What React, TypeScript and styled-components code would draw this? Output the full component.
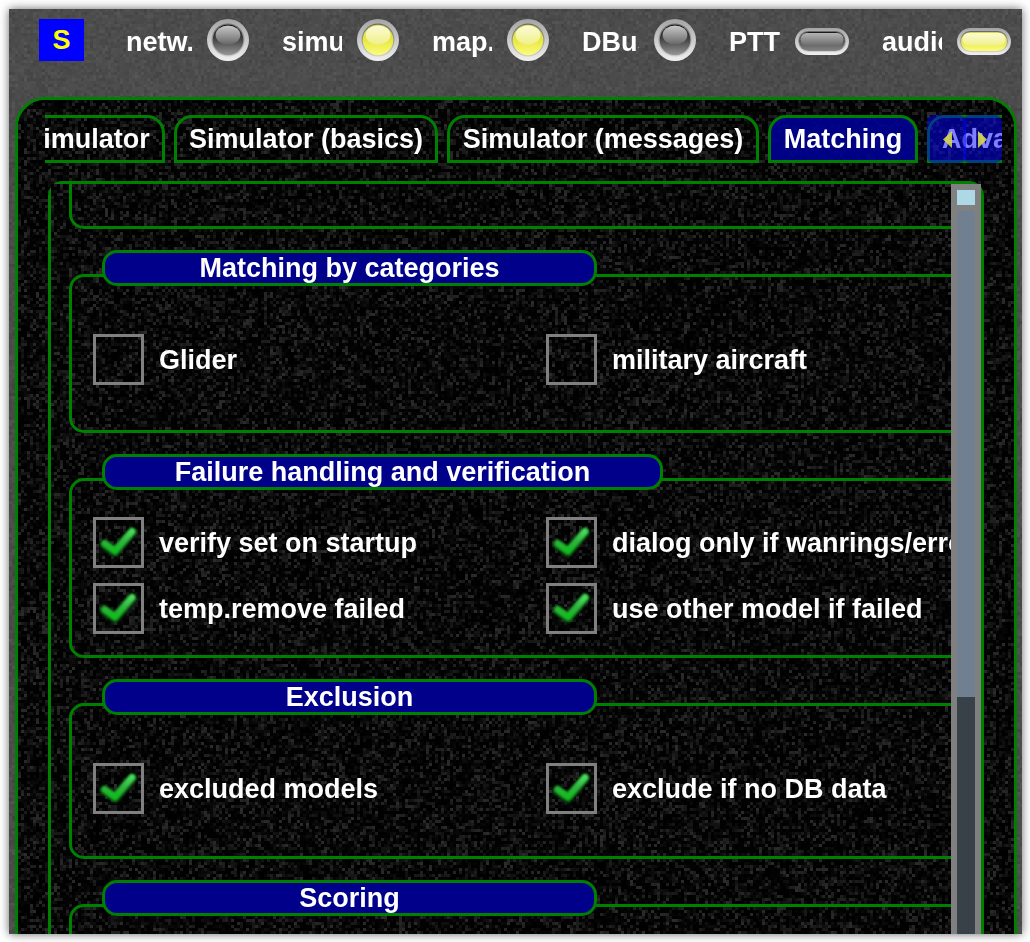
import React, { useLayoutEffect, useRef } from 'react';
import styled, { createGlobalStyle, css } from 'styled-components';

const GREEN = '#008000';
const NAVY = '#00008b';

const GlobalStyle = createGlobalStyle`
  * { box-sizing: border-box; }
  body { margin: 0; background: #fff; overflow: hidden; }
`;

const Page = styled.div`
  width: 1030px;
  height: 942px;
  padding: 9px 8px 8px 9px;
  background: #fff;
  overflow: hidden;
  font: bold 27px/33px 'Liberation Sans', Arial, sans-serif;
  color: #fff;
`;

const Window = styled.div`
  position: relative;
  width: 1013px;
  height: 925px;
  display: flex;
  flex-direction: column;
  background: #4c4c4c;
  box-shadow: 0 0 9px rgba(0, 0, 0, 0.6);
`;

const WindowBody = styled.div`
  position: relative;
  flex: 1;
  min-height: 0;
  display: flex;
  flex-direction: column;
  overflow: hidden;
`;

const GrainCanvas = styled.canvas`
  position: absolute;
  top: 0;
  left: 0;
  image-rendering: pixelated;
`;

const StatusBar = styled.header`
  position: relative;
  flex: none;
  display: flex;
  align-items: center;
  height: 88px;
  padding: 0 11px 26px 30px;
`;

const Badge = styled.div`
  display: flex;
  align-items: center;
  justify-content: center;
  width: 45px;
  height: 42px;
  margin-right: 42px;
  background: #0000ff;
  color: #ffff00;
`;

const StatusItem = styled.div`
  display: flex;
  align-items: center;
  gap: 15px;
  height: 42px;
  & + & { margin-left: 33px; }
`;

const StatusLabel = styled.span<{ $w: number }>`
  width: ${p => p.$w}px;
  padding-top: 4px;
  overflow: hidden;
  white-space: nowrap;
`;

const Lamp = styled.svg<{ $pill?: boolean }>`
  display: block;
  flex: none;
  ${p => p.$pill && css`margin-top: 3px;`}
`;

const Panel = styled.main`
  position: relative;
  flex: none;
  width: 1002px;
  height: 900px;
  margin-left: 6px;
  border: 3px solid ${GREEN};
  border-radius: 30px;
  background: #080808;
  overflow: hidden;
`;

const TabStrip = styled.nav`
  position: relative;
  display: flex;
  gap: 9px;
  width: 957px;
  height: 48px;
  margin: 15px 0 0 27px;
  overflow: hidden;
`;

const Tab = styled.div<{ $w: number; $active?: boolean; $scrolled?: boolean }>`
  flex: none;
  width: ${p => p.$w}px;
  height: 48px;
  padding: 5px 0 0;
  border: 3px solid ${GREEN};
  border-radius: 18px 18px 0 0;
  text-align: center;
  white-space: nowrap;
  background: ${p => (p.$active ? 'rgba(0, 0, 150, 0.88)' : 'transparent')};
  ${p => p.$scrolled && css`margin-left: -35px;`}
`;

const TabScroller = styled.div`
  position: absolute;
  top: 0;
  right: 0;
  display: flex;
`;

const ScrollButton = styled.div<{ $next?: boolean }>`
  display: flex;
  align-items: center;
  justify-content: ${p => (p.$next ? 'flex-start' : 'flex-end')};
  width: 39px;
  height: 48px;
  padding: ${p => (p.$next ? '0 0 0 15px' : '0 14px 0 0')};
  margin-left: ${p => (p.$next ? '-3px' : '0')};
  border-radius: 7px;
  background: rgba(0, 0, 255, 0.5);
`;

const Pane = styled.section`
  position: relative;
  width: 936px;
  height: 790px;
  margin: 18px 0 0 30px;
  border: 3px solid ${GREEN};
  border-radius: 15px;
  display: flex;
`;

const Viewport = styled.div`
  position: relative;
  width: 900px;
  height: 784px;
  background: #080808;
  overflow: hidden;
`;

const Groups = styled.div`
  position: relative;
  display: flex;
  flex-direction: column;
  gap: 21px;
  width: 1000px;
  padding-left: 18px;
`;

const GroupBox = styled.div``;

const GroupTitle = styled.h2<{ $w: number }>`
  position: relative;
  z-index: 1;
  display: flex;
  align-items: center;
  justify-content: center;
  width: ${p => p.$w}px;
  height: 36px;
  margin: 0 0 -12px 33px;
  border: 3px solid ${GREEN};
  border-radius: 15px;
  background: ${NAVY};
  font: inherit;
`;

const Frame = styled.div<{ $h: number; $top?: number; $cut?: boolean }>`
  display: flex;
  flex-direction: column;
  justify-content: center;
  gap: 15px;
  height: ${p => p.$h}px;
  padding: ${p => p.$top ?? 0}px 0 0 21px;
  border: 3px solid ${GREEN};
  border-radius: 15px;
  ${p => p.$cut && css`
    border-top: 0;
    border-radius: 0 0 15px 15px;
  `}
`;

const OptionRow = styled.div`
  display: grid;
  grid-template-columns: 453px 1fr;
`;

const Option = styled.label`
  display: flex;
  align-items: center;
  gap: 15px;
  white-space: nowrap;
`;

const OptionText = styled.span`
  padding-top: 2px;
`;

const Box = styled.span`
  width: 51px;
  height: 51px;
  border: 3px solid #808080;
  svg { display: block; }
`;

const ScrollBar = styled.div`
  position: relative;
  width: 30px;
  height: 784px;
  padding: 6px;
  background: #808080;
`;

const ScrollArrow = styled.div`
  height: 15px;
  margin-bottom: 6px;
  background: #add8e6;
`;

const ScrollThumb = styled.div`
  height: 486px;
  background: #708090;
`;

const ScrollTrack = styled.div`
  height: 260px;
  background: #384048;
`;

type GrainTone = 'slate' | 'coal';

const GRAIN_SIZE = 3;

/* Speckled background: one random grey per 3px cell. */
function Grain({ w, h, tone, seed }: { w: number; h: number; tone: GrainTone; seed: number }) {
  const ref = useRef<HTMLCanvasElement>(null);
  useLayoutEffect(() => {
    const ctx = ref.current?.getContext('2d');
    if (!ctx) return;
    let s = seed;
    const rand = () => {
      s = (s + 0x6d2b79f5) | 0;
      let t = Math.imul(s ^ (s >>> 15), 1 | s);
      t = (t + Math.imul(t ^ (t >>> 7), 61 | t)) ^ t;
      return ((t ^ (t >>> 14)) >>> 0) / 4294967296;
    };
    for (let y = 0; y < h; y++) {
      for (let x = 0; x < w; x++) {
        const r = rand();
        const v = Math.round(tone === 'slate' ? 66 + (r + rand()) * 10 : Math.pow(r, 3) * 44);
        ctx.fillStyle = `rgb(${v},${v},${v})`;
        ctx.fillRect(x * GRAIN_SIZE, y * GRAIN_SIZE, GRAIN_SIZE, GRAIN_SIZE);
      }
    }
  }, [w, h, tone, seed]);
  return <GrainCanvas ref={ref} width={w * GRAIN_SIZE} height={h * GRAIN_SIZE} />;
}

function LampDefs() {
  return (
    <svg width="0" height="0" style={{ position: 'absolute' }}>
      <defs>
        <linearGradient id="rim" x1="0" y1="0" x2="0" y2="1">
          <stop offset="0" stopColor="#a4a4a4" />
          <stop offset="1" stopColor="#f0f0f0" />
        </linearGradient>
        <linearGradient id="bezel" x1="0" y1="0" x2="0" y2="1">
          <stop offset="0" stopColor="#686868" />
          <stop offset="1" stopColor="#d0d0d0" />
        </linearGradient>
        <linearGradient id="off" x1="0" y1="0" x2="0" y2="1">
          <stop offset="0" stopColor="#080808" />
          <stop offset="0.5" stopColor="#484848" />
          <stop offset="1" stopColor="#989898" />
        </linearGradient>
        <linearGradient id="on" x1="0" y1="0" x2="0" y2="1">
          <stop offset="0" stopColor="#d6d83c" />
          <stop offset="0.5" stopColor="#e7e83e" />
          <stop offset="1" stopColor="#fcfc80" />
        </linearGradient>
        <linearGradient id="offPill" x1="0" y1="0" x2="0" y2="1">
          <stop offset="0" stopColor="#181818" />
          <stop offset="0.55" stopColor="#5c5c5c" />
          <stop offset="1" stopColor="#858585" />
        </linearGradient>
        <linearGradient id="offGloss" x1="0" y1="0" x2="0" y2="1">
          <stop offset="0" stopColor="#c8c8c8" />
          <stop offset="1" stopColor="#686868" />
        </linearGradient>
        <linearGradient id="offPillGloss" x1="0" y1="0" x2="0" y2="1">
          <stop offset="0" stopColor="#b4b4b4" />
          <stop offset="1" stopColor="#6c6c6c" />
        </linearGradient>
        <linearGradient id="onGloss" x1="0" y1="0" x2="0" y2="1">
          <stop offset="0" stopColor="#fbfbd6" />
          <stop offset="1" stopColor="#f0f08a" />
        </linearGradient>
        <linearGradient id="tick" x1="0" y1="0" x2="0" y2="1">
          <stop offset="0" stopColor="#4bdc5c" />
          <stop offset="0.5" stopColor="#2fb43d" />
          <stop offset="1" stopColor="#12bc1e" />
        </linearGradient>
      </defs>
    </svg>
  );
}

function RoundLamp({ on }: { on?: boolean }) {
  return (
    <Lamp width="42" height="42" viewBox="0 0 42 42">
      <circle cx="21" cy="21" r="21" fill="url(#rim)" />
      <circle cx="21" cy="21" r="16.5" fill="url(#bezel)" />
      <circle cx="21" cy="21" r="15.3" fill={on ? 'url(#on)' : 'url(#off)'} />
      <ellipse cx="21" cy="16" rx="12.4" ry="9.4" fill={on ? 'url(#onGloss)' : 'url(#offGloss)'} />
    </Lamp>
  );
}

function PillLamp({ on }: { on?: boolean }) {
  return (
    <Lamp $pill width="54" height="27" viewBox="0 0 54 27">
      <rect width="54" height="27" rx="13.5" fill="url(#rim)" />
      <rect x="3" y="3" width="48" height="21" rx="10.5" fill="url(#bezel)" />
      <rect x="4" y="4" width="46" height="19" rx="9.5" fill={on ? 'url(#on)' : 'url(#offPill)'} />
      <rect x="5.5" y="5" width="43" height="12.5" rx="6.25" fill={on ? 'url(#onGloss)' : 'url(#offPillGloss)'} />
    </Lamp>
  );
}

function Tick() {
  return (
    <svg width="45" height="45" viewBox="3 3 45 45" fill="none" strokeLinecap="round" strokeLinejoin="round">
      <path d="M11.5 27.3 L22 34.8 L39 15.2" stroke="#0a5012" strokeWidth="9.5" style={{ filter: 'blur(1.1px)' }} />
      <path d="M11.7 26.6 L22 34 L39 14.6" stroke="url(#tick)" strokeWidth="6.6" style={{ filter: 'blur(0.9px)' }} />
    </svg>
  );
}

function CheckOption({ label, checked }: { label: string; checked?: boolean }) {
  return (
    <Option>
      <Box>{checked && <Tick />}</Box>
      <OptionText>{label}</OptionText>
    </Option>
  );
}

type Item = { label: string; checked?: boolean };

const groups: { title: string; titleWidth: number; height: number; top: number; rows: Item[][] }[] = [
  {
    title: 'Matching by categories',
    titleWidth: 495,
    height: 159,
    top: 12,
    rows: [[{ label: 'Glider' }, { label: 'military aircraft' }]],
  },
  {
    title: 'Failure handling and verification',
    titleWidth: 561,
    height: 180,
    top: 15,
    rows: [
      [{ label: 'verify set on startup', checked: true }, { label: 'dialog only if wanrings/errors', checked: true }],
      [{ label: 'temp.remove failed', checked: true }, { label: 'use other model if failed', checked: true }],
    ],
  },
  {
    title: 'Exclusion',
    titleWidth: 495,
    height: 156,
    top: 15,
    rows: [[{ label: 'excluded models', checked: true }, { label: 'exclude if no DB data', checked: true }]],
  },
  { title: 'Scoring', titleWidth: 495, height: 160, top: 15, rows: [] },
];

const statuses = [
  { label: 'netw.', width: 66, on: false, pill: false },
  { label: 'simu', width: 60, on: true, pill: false },
  { label: 'map.', width: 60, on: true, pill: false },
  { label: 'DBus', width: 57, on: false, pill: false },
  { label: 'PTT', width: 51, on: false, pill: true },
  { label: 'audio', width: 60, on: true, pill: true },
];

export default function App() {
  return (
    <Page>
      <GlobalStyle />
      <LampDefs />
      <Window>
        <WindowBody>
          <Grain w={338} h={309} tone="slate" seed={11} />
          <StatusBar>
            <Badge>S</Badge>
            {statuses.map(s => (
              <StatusItem key={s.label}>
                <StatusLabel $w={s.width}>{s.label}</StatusLabel>
                {s.pill ? <PillLamp on={s.on} /> : <RoundLamp on={s.on} />}
              </StatusItem>
            ))}
          </StatusBar>
          <Panel>
            <Grain w={332} h={285} tone="coal" seed={27} />
            <TabStrip>
              <Tab $w={155} $scrolled>Simulator</Tab>
              <Tab $w={264}>Simulator (basics)</Tab>
              <Tab $w={312}>Simulator (messages)</Tab>
              <Tab $w={150} $active>Matching</Tab>
              <Tab $w={159}>Advanced</Tab>
              <TabScroller>
                <ScrollButton>
                  <svg width="9" height="17" viewBox="0 0 9 17"><path d="M9 0V17L0 8.5Z" fill="#d6d64a" fillOpacity="0.9" /></svg>
                </ScrollButton>
                <ScrollButton $next>
                  <svg width="9" height="17" viewBox="0 0 9 17"><path d="M0 0V17L9 8.5Z" fill="#d6d64a" fillOpacity="0.9" /></svg>
                </ScrollButton>
              </TabScroller>
            </TabStrip>
            <Pane>
              <Viewport>
                <Grain w={300} h={262} tone="coal" seed={53} />
                <Groups>
                  <Frame $h={45} $cut />
                  {groups.map(g => (
                    <GroupBox key={g.title}>
                      <GroupTitle $w={g.titleWidth}>{g.title}</GroupTitle>
                      <Frame $h={g.height} $top={g.top}>
                        {g.rows.map((row, i) => (
                          <OptionRow key={i}>
                            {row.map(o => (
                              <CheckOption key={o.label} {...o} />
                            ))}
                          </OptionRow>
                        ))}
                      </Frame>
                    </GroupBox>
                  ))}
                </Groups>
              </Viewport>
              <ScrollBar>
                <ScrollArrow />
                <ScrollThumb />
                <ScrollTrack />
              </ScrollBar>
            </Pane>
          </Panel>
        </WindowBody>
      </Window>
    </Page>
  );
}
